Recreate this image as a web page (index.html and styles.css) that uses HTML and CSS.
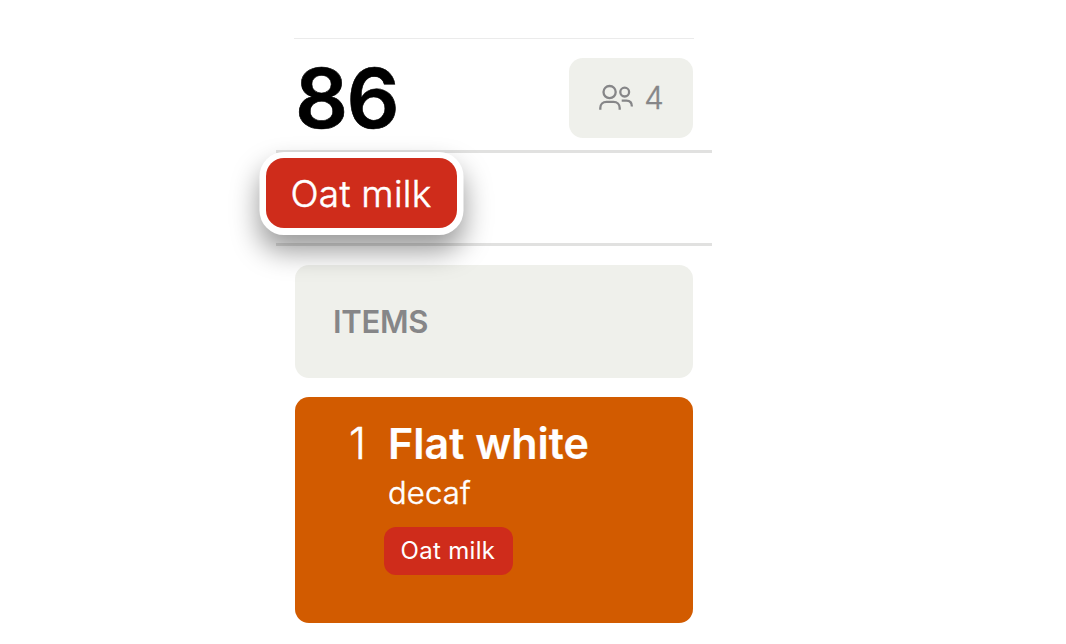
FILE: index.html
```
<!DOCTYPE html>
<html lang="en">

<head>
    <meta charset="UTF-8">
    <meta name="viewport" content="width=device-width, initial-scale=1.0">
    <title>Order 86</title>
    <link rel="stylesheet" href="styles.css">
</head>

<body>
    <main class="ticket">
        <header class="ticket-header">
            <h1 class="order-number">86</h1>
            <div class="guests">
                <svg class="guests-icon" width="36" height="28" viewBox="0 0 36 28" fill="none" stroke="#868688" stroke-width="2.3">
                    <circle cx="11.600" cy="8.100" r="6.100" />
                    <circle cx="26.700" cy="8.100" r="4.400" />
                    <path d="M2.300 25.700v-1.700c0-3.700 2.600-6.200 6.200-6.200h7c3.600 0 6.200 2.500 6.200 6.200v1.700" />
                    <path d="M23.700 16.700h4.700c3.500 0 5.500 2.100 5.500 5.900" />
                </svg>
                <span class="guests-count">4</span>
            </div>
        </header>
        <div class="tag-row">
            <span class="tag tag-large">Oat milk</span>
        </div>
        <section class="items">
            <h2 class="items-title">ITEMS</h2>
            <article class="item">
                <span class="quantity">1</span>
                <div class="item-info">
                    <h3 class="item-name">Flat white</h3>
                    <p class="item-note">decaf</p>
                    <span class="tag tag-small">Oat milk</span>
                </div>
            </article>
        </section>
    </main>
</body>

</html>
```
FILE: styles.css
```
* {
    box-sizing: border-box;
}

body {
    margin: 0;
    height: 644px;
    overflow: hidden;
    background-color: #fff;
    font-family: Inter, "Liberation Sans", sans-serif;
}

h1, h2, h3, p {
    margin: 0;
}

.ticket {
    width: 436px;
    margin: 38px 0 0 276px;
    padding-top: 1px;
    background: linear-gradient(#ebebeb, #ebebeb) 18px 0 / 400px 1px no-repeat;
}

.ticket-header {
    display: flex;
    justify-content: space-between;
    align-items: center;
    height: 114px;
    padding: 6px 19px 0 19px;
    border-bottom: 3px solid #e1e1e0;
}

.order-number {
    font-size: 83px;
    line-height: 80px;
    font-weight: 600;
    letter-spacing: -1.6px;
    color: #000;
    -webkit-text-stroke: 0.6px #000;
}

.guests {
    display: flex;
    align-items: center;
    justify-content: center;
    gap: 10px;
    width: 124px;
    height: 80px;
    border-radius: 14px;
    background-color: #eff0eb;
    color: #868688;
}

.guests-count {
    font-size: 31px;
    font-weight: 300;
    -webkit-text-stroke: 0.4px #868688;
}

/* The large tag hangs over the left edge of the ticket */
.tag-row {
    height: 93px;
    padding-top: 5px;
    border-bottom: 3px solid #e1e1e0;
}

.tag {
    display: flex;
    align-items: center;
    justify-content: center;
    background-color: #cf2c1b;
    color: #fff;
}

.tag-large {
    position: relative;
    width: 191px;
    height: 70px;
    margin-left: -10px;
    padding: 0 1px 0 0;
    border-radius: 18px;
    box-shadow: 0 0.5px 0 6.5px #fff, 0 16px 28px 7px rgba(0, 0, 0, 0.4);
    font-size: 37px;
    font-weight: 300;
    letter-spacing: 0.25px;
    -webkit-text-stroke: 0.5px #fff;
}

.tag-small {
    width: 129px;
    height: 48px;
    margin: 15px 0 0 -5px;
    padding: 0 1px 2px 0;
    border-radius: 12px;
    font-size: 24px;
    font-weight: 400;
    letter-spacing: 0.3px;
}

.items {
    display: flex;
    flex-direction: column;
    gap: 19px;
    padding: 19px 19px 0;
}

.items-title {
    height: 113px;
    padding-left: 38px;
    border-radius: 14px;
    background-color: #eff0eb;
    color: #868688;
    font-size: 31px;
    line-height: 113px;
    font-weight: 600;
    letter-spacing: -0.3px;
}

.item {
    display: flex;
    gap: 23px;
    height: 226px;
    padding: 20px 20px 0 54px;
    border-radius: 14px;
    background-color: #d25b00;
    color: #fff;
}

.quantity {
    font-size: 43px;
    line-height: 53px;
    font-weight: 300;
    -webkit-text-stroke: 0.5px #fff;
}

.item-name {
    margin-left: -1px;
    font-size: 43px;
    line-height: 53px;
    font-weight: 600;
    -webkit-text-stroke: 0.2px #fff;
}

.item-note {
    margin: 4px 0 0 -1px;
    font-size: 31px;
    line-height: 38px;
    font-weight: 300;
    letter-spacing: 0.2px;
    -webkit-text-stroke: 0.5px #fff;
}
```
